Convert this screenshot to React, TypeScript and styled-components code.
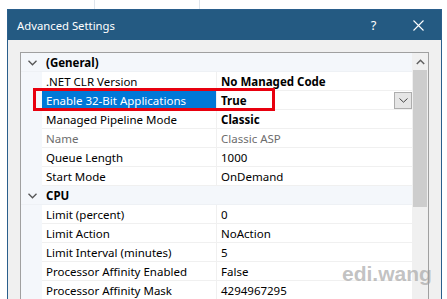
import React from "react";
import styled, { createGlobalStyle } from "styled-components";

type Prop = {
  label: string;
  value: string;
  bold?: boolean;
  dim?: boolean;
  selected?: boolean;
};

type Category = { name: string; props: Prop[] };

const categories: Category[] = [
  {
    name: "(General)",
    props: [
      { label: ".NET CLR Version", value: "No Managed Code", bold: true },
      { label: "Enable 32-Bit Applications", value: "True", bold: true, selected: true },
      { label: "Managed Pipeline Mode", value: "Classic", bold: true },
      { label: "Name", value: "Classic ASP", dim: true },
      { label: "Queue Length", value: "1000" },
      { label: "Start Mode", value: "OnDemand" },
    ],
  },
  {
    name: "CPU",
    props: [
      { label: "Limit (percent)", value: "0" },
      { label: "Limit Action", value: "NoAction" },
      { label: "Limit Interval (minutes)", value: "5" },
      { label: "Processor Affinity Enabled", value: "False" },
      { label: "Processor Affinity Mask", value: "4294967295" },
    ],
  },
];

const App = () => {
  return (
    <Page>
      <GlobalStyle />
      <Dialog>
        <TitleBar>
          <Title>Advanced Settings</Title>
          <TitleButton>?</TitleButton>
          <TitleButton>
            <svg width="11" height="11" viewBox="0 0 11 11">
              <path d="M0.5 0.5 L10.5 10.5 M10.5 0.5 L0.5 10.5" stroke="#fff" strokeWidth="1.1" />
            </svg>
          </TitleButton>
        </TitleBar>
        <Body>
          <Grid>
            <Rows>
              {categories.map((cat) => (
                <React.Fragment key={cat.name}>
                  <CategoryRow>
                    <Margin>
                      <svg width="9" height="6" viewBox="0 0 9 6">
                        <path d="M0.5 0.8 L4.5 4.8 L8.5 0.8" fill="none" stroke="#555" strokeWidth="1.3" />
                      </svg>
                    </Margin>
                    <CategoryName>{cat.name}</CategoryName>
                  </CategoryRow>
                  {cat.props.map((p) => (
                    <Row key={p.label}>
                      <Margin />
                      <Label $selected={p.selected} $dim={p.dim}>
                        {p.label}
                      </Label>
                      <Value $bold={p.bold} $dim={p.dim}>
                        <span>{p.value}</span>
                        {p.selected && (
                          <DropButton>
                            <svg width="9" height="5" viewBox="0 0 9 5">
                              <path d="M0.5 0.5 L4.5 4.2 L8.5 0.5" fill="none" stroke="#444" strokeWidth="1" />
                            </svg>
                          </DropButton>
                        )}
                      </Value>
                    </Row>
                  ))}
                </React.Fragment>
              ))}
            </Rows>
            <ScrollBar>
              <ScrollArrow>
                <svg width="9" height="6" viewBox="0 0 9 6">
                  <path d="M0.8 5 L4.5 1.3 L8.2 5" fill="none" stroke="#606060" strokeWidth="1.5" />
                </svg>
              </ScrollArrow>
              <Thumb />
            </ScrollBar>
          </Grid>
        </Body>
      </Dialog>
      <Highlight />
      <Watermark>edi.wang</Watermark>
    </Page>
  );
};

const GlobalStyle = createGlobalStyle`
  body {
    margin: 0;
    background: #ffffff;
    font-family: "Noto Sans", "Open Sans", sans-serif;
    font-size: 11.5px;
    overflow: hidden;
  }
`;

const Page = styled.div`
  position: relative;
  width: 447px;
  height: 299px;
  overflow: hidden;
  box-sizing: border-box;
  padding: 9px 0 0 7px;
  background:
    linear-gradient(#dfe5ec, #dfe5ec) 94px 0 / 1px 9px no-repeat,
    linear-gradient(#dfe5ec, #dfe5ec) 199px 0 / 1px 9px no-repeat,
    #ffffff;
`;

const Dialog = styled.div`
  width: 435px;
  height: 300px;
  box-sizing: border-box;
  border: 1px solid #2a5f8c;
  background: #f0f0f0;
`;

const TitleBar = styled.div`
  height: 30px;
  background: #245a82;
  display: flex;
  align-items: center;
  color: #ffffff;
`;

const Title = styled.div`
  flex: 1;
  padding-left: 9px;
  font-size: 11.3px;
`;

const TitleButton = styled.div`
  width: 45px;
  display: flex;
  align-items: center;
  justify-content: center;
  font-size: 13px;
`;

const Body = styled.div`
  padding: 12px 12px 0 12px;
`;

const Grid = styled.div`
  display: flex;
  height: 260px;
  border: 1px solid #a0a0a0;
  background: #ffffff;
`;

const Rows = styled.div`
  flex: 1;
  display: flex;
  flex-direction: column;
`;

const RowBase = styled.div`
  display: grid;
  grid-template-columns: 21px 175px 1fr;
  height: 19px;
  flex-shrink: 0;
`;

const CategoryRow = styled(RowBase)`
  background: #f4f7fb;
  border-bottom: 1px solid #eef1f5;
  box-sizing: border-box;
`;

const Row = styled(RowBase)``;

const Margin = styled.div`
  background: #f4f7fb;
  display: flex;
  align-items: center;
  justify-content: center;
  padding: 1px 0 0 2px;
`;

const CategoryName = styled.div`
  grid-column: 2 / 4;
  font-weight: bold;
  line-height: 17px;
  padding: 1px 0 0 4px;
  color: #000;
`;

const Cell = styled.div`
  box-sizing: border-box;
  border-bottom: 1px solid #f0f0f0;
  line-height: 17px;
  padding: 1px 0 0 4px;
  white-space: nowrap;
  overflow: hidden;
`;

const Label = styled(Cell)<{ $selected?: boolean; $dim?: boolean }>`
  border-right: 1px solid #f0f0f0;
  background: ${(p) => (p.$selected ? "#0078d7" : "transparent")};
  color: ${(p) => (p.$selected ? "#ffffff" : p.$dim ? "#6d6d6d" : "#000000")};
`;

const Value = styled(Cell)<{ $bold?: boolean; $dim?: boolean }>`
  display: flex;
  justify-content: space-between;
  align-items: center;
  padding-top: 0;
  font-weight: ${(p) => (p.$bold ? "bold" : "normal")};
  color: ${(p) => (p.$dim ? "#6d6d6d" : "#000000")};

  & > span {
    padding-top: 1px;
  }
`;

const DropButton = styled.div`
  width: 18px;
  height: 17px;
  box-sizing: border-box;
  border: 1px solid #adadad;
  background: #e5e5e5;
  display: flex;
  align-items: center;
  justify-content: center;
`;

const ScrollBar = styled.div`
  width: 16px;
  background: #f0f0f0;
  display: flex;
  flex-direction: column;
`;

const ScrollArrow = styled.div`
  height: 17px;
  display: flex;
  align-items: center;
  justify-content: center;
`;

const Thumb = styled.div`
  height: 137px;
  margin: 0 1px;
  background: #cdcdcd;
`;

const Highlight = styled.div`
  position: absolute;
  left: 33px;
  top: 88px;
  width: 242px;
  height: 23px;
  box-sizing: border-box;
  border: 3px solid #e8000e;
`;

const Watermark = styled.div`
  position: absolute;
  left: 342px;
  top: 262px;
  font-family: "Liberation Sans", Arial, sans-serif;
  font-weight: bold;
  font-size: 21px;
  color: rgba(160, 160, 160, 0.65);
`;

export default App;
